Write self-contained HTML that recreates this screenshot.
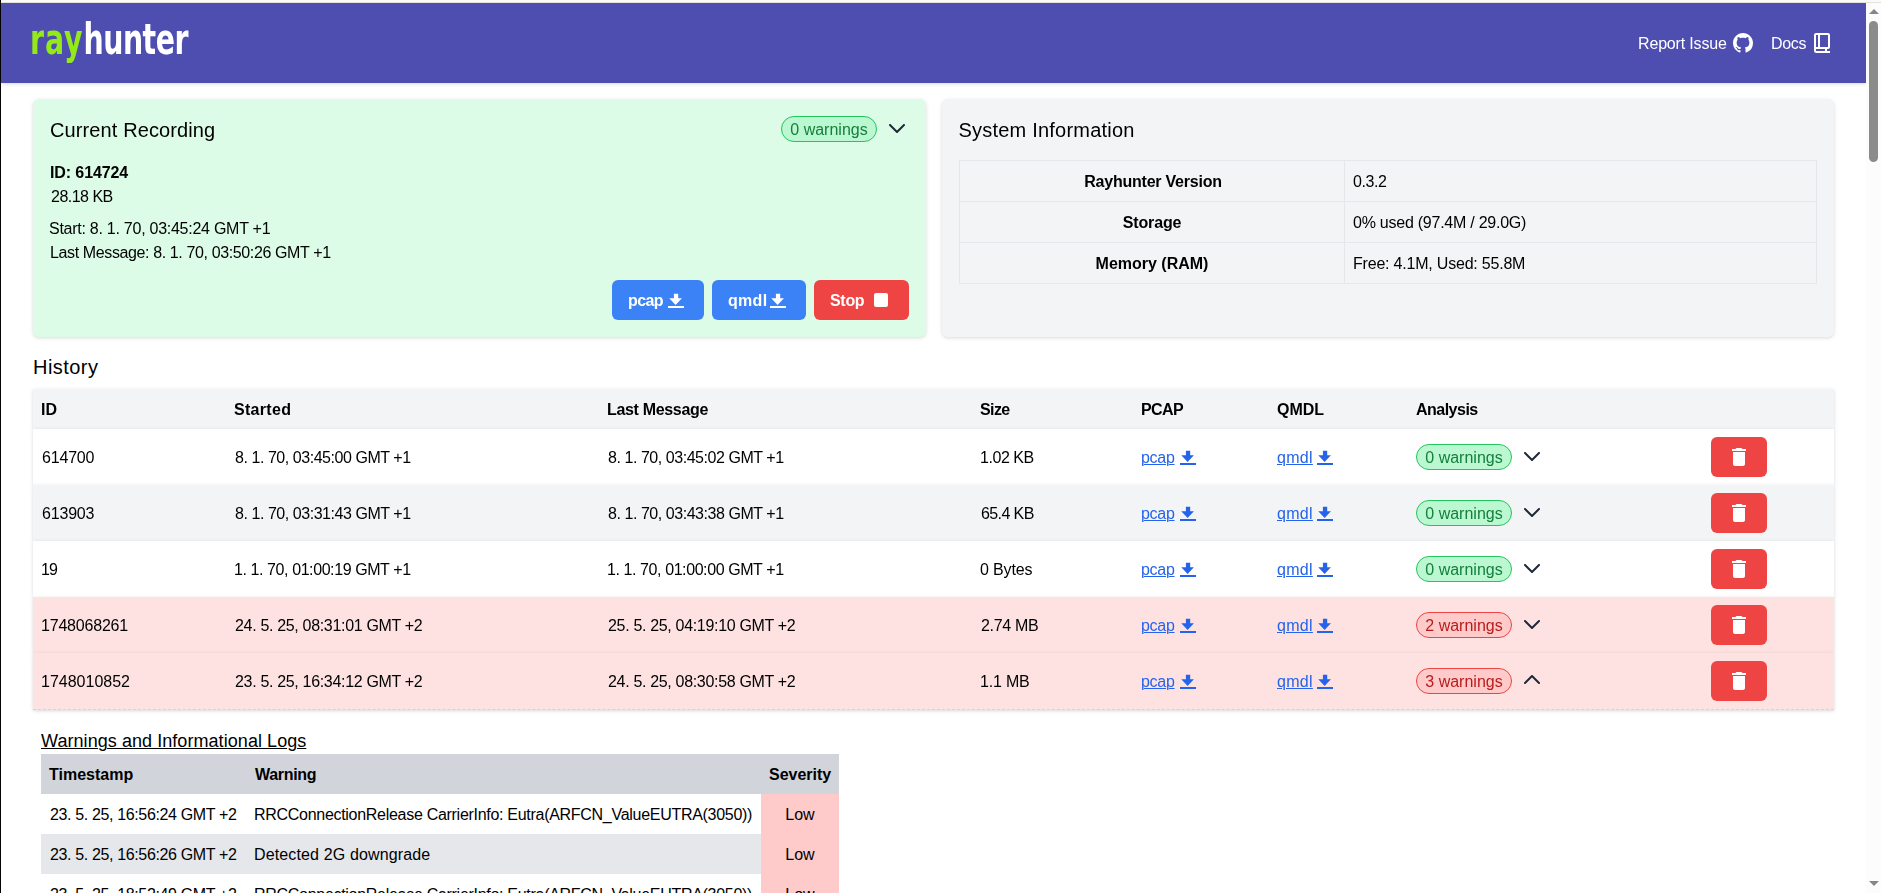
<!DOCTYPE html>
<html lang="en">
<head>
<meta charset="utf-8">
<title>Rayhunter</title>
<style>
*{box-sizing:border-box;margin:0;padding:0}
html,body{width:1881px;height:893px;overflow:hidden;background:#fff}
body{position:relative;font-family:"Liberation Sans",sans-serif;font-size:16px;line-height:24px;color:#000}
#edge{position:absolute;left:0;top:0;width:1px;height:893px;background:#050402;z-index:9}
#topstrip{position:absolute;left:1px;top:0;width:1880px;height:3px;background:linear-gradient(#fbfbfb 0,#fbfbfb 2px,#e3e3dc 2px,#e3e3dc 3px);z-index:8}
#vp{position:absolute;left:1px;top:3px;width:1865px;height:890px;overflow:hidden;background:#fff}
#sb{position:absolute;left:1866px;top:3px;width:15px;height:890px;background:#fcfcfc}
#sb .up{position:absolute;left:2.5px;top:5.6px;width:0;height:0;border-left:5px solid transparent;border-right:5px solid transparent;border-bottom:5.4px solid #868686}
#sb .dn{position:absolute;left:2.5px;top:877.6px;width:0;height:0;border-left:5px solid transparent;border-right:5px solid transparent;border-top:5.4px solid #868686}
#sb .th{position:absolute;left:3px;top:18px;width:9px;height:141px;border-radius:4.5px;background:#8b8b8b}
svg{display:block}
/* header */
#hd{position:absolute;left:0;top:0;width:1865px;height:80px;background:#4e4eb1;filter:drop-shadow(0 1px 2px rgba(0,0,0,.1)) drop-shadow(0 1px 1px rgba(0,0,0,.06));z-index:3}
.abs{position:absolute;white-space:nowrap}
.hl{color:#fff;font-size:16px;line-height:24px}
/* cards */
.card{position:absolute;top:96px;height:238px;border-radius:6px;filter:drop-shadow(0 1px 2px rgba(0,0,0,.1)) drop-shadow(0 1px 1px rgba(0,0,0,.06))}
.xl{font-size:20px;line-height:28px}
.b{font-weight:700}
.btn{position:absolute;top:181px;height:40px;border-radius:6px;color:#fff;font-weight:700}
.blue{background:#3b82f6}
.red{background:#ef4444}
.badge{position:absolute;height:26px;border-radius:13px;border:1px solid;text-align:center;line-height:24px}
.bg{background:#bbf7d0;border-color:#22c55e;color:#15803d}
.br{background:#fecaca;border-color:#ef4444;color:#b91c1c}
#systab{position:absolute;left:17px;top:61px;width:858px;border-collapse:collapse;table-layout:fixed}
#systab th,#systab td{border:1px solid #e5e7eb;height:41px;padding:0 8px;vertical-align:middle;line-height:24px}
#systab th{width:385px;text-align:center;font-weight:700}
#systab td{text-align:left}
#hist{position:absolute;left:32px;top:386px;width:1801px;height:324px}
.hrow{position:relative;height:56px;background:#fff;white-space:nowrap;filter:drop-shadow(0 1px 2px rgba(0,0,0,.1)) drop-shadow(0 1px 1px rgba(0,0,0,.06))}
.hrow.hh{height:40px;background:#f3f4f6;font-weight:700}
.hrow.alt{background:#f3f4f6}
.hrow.warn{background:#fee2e2}
.hrow.last{height:57px;border-bottom:1px dashed #d1d5db}
.hrow .c{position:absolute;top:16px;line-height:24px}
.hrow.hh .c{top:8px}
.c1{left:8px}.c2{left:201px}.c3{left:574px}.c4{left:947px}.c5{left:1108px}.c6{left:1244px}.c7{left:1383px}
.lk{color:#2563eb}
.lk .u{text-decoration:underline;text-decoration-thickness:1px;text-underline-offset:2px}
.lk svg{position:absolute;top:5px}
.c5 svg{left:39px}.c6 svg{left:40px}
.hrow .chv{position:absolute;left:1491px;top:23px}
.del{position:absolute;left:1678px;top:8px;width:56px;height:40px;border-radius:6px;background:#ef4444;padding:8px 16px}
#logs{position:absolute;left:40px;top:751px;width:798px}
.lrow{position:relative;height:40px;background:#fff;white-space:nowrap}
.lrow.lh{background:#d1d5db;font-weight:700}
.lrow.alt{background:#e5e7eb}
.lrow .c{position:absolute;top:8px;line-height:24px}
.l1{left:8px}.l2{left:213px}.l3{left:728px}
.sev{position:absolute;left:720px;top:0;width:78px;height:40px;background:#fecaca;text-align:center;line-height:24px;padding-top:8px}
/*LIB*/
.lk .u,#t-wil{text-underline-offset:1px!important}
#t-hrep{letter-spacing:-0.164px;display:inline-block;transform:translate(0px,1px)}
#t-hdoc{letter-spacing:-0.300px;display:inline-block;transform:translate(0px,1px)}
#t-cur{letter-spacing:0.112px}
#t-bcur{display:inline-block;transform:translate(0px,1px)}
#t-id{letter-spacing:-0.100px;display:inline-block;transform:translate(0px,1px)}
#t-sz{letter-spacing:-0.515px;display:inline-block;transform:translate(1px,1px)}
#t-st{letter-spacing:-0.261px;display:inline-block;transform:translate(-1px,1px)}
#t-lm{letter-spacing:-0.379px;display:inline-block;transform:translate(0px,1px)}
#t-bp{letter-spacing:-0.600px;display:inline-block;transform:translate(0px,1px)}
#t-bq{letter-spacing:0.300px;display:inline-block;transform:translate(0px,1px)}
#t-bs{letter-spacing:-0.300px;display:inline-block;transform:translate(0px,1px)}
#t-sys{letter-spacing:0.212px}
#t-rv{letter-spacing:-0.225px;display:inline-block;transform:translate(1px,1px)}
#t-v1{letter-spacing:-0.450px;display:inline-block;transform:translate(0px,1px)}
#t-sto{letter-spacing:-0.150px;display:inline-block;transform:translate(0px,1px)}
#t-v2{letter-spacing:-0.245px;display:inline-block;transform:translate(0px,1px)}
#t-mem{display:inline-block;transform:translate(0px,1px)}
#t-v3{letter-spacing:-0.205px;display:inline-block;transform:translate(0px,1px)}
#t-hist{letter-spacing:0.450px}
#t-hid{display:inline-block;transform:translate(0px,1px)}
#t-hst{letter-spacing:0.300px;display:inline-block;transform:translate(0px,1px)}
#t-hlm{letter-spacing:-0.327px;display:inline-block;transform:translate(0px,1px)}
#t-hsz{letter-spacing:-0.600px;display:inline-block;transform:translate(0px,1px)}
#t-hpc{letter-spacing:-0.600px;display:inline-block;transform:translate(0px,1px)}
#t-hqm{display:inline-block;transform:translate(0px,1px)}
#t-han{letter-spacing:-0.514px;display:inline-block;transform:translate(0px,1px)}
#t-r1a{letter-spacing:-0.180px;display:inline-block;transform:translate(1px,1px)}
#t-r1b{letter-spacing:-0.449px;display:inline-block;transform:translate(1px,1px)}
#t-r1c{letter-spacing:-0.449px;display:inline-block;transform:translate(1px,1px)}
#t-r1d{letter-spacing:-0.450px;display:inline-block;transform:translate(0px,1px)}
#t-r1p{letter-spacing:-0.300px;display:inline-block;transform:translate(0px,1px)}
#t-r1q{letter-spacing:0.300px;display:inline-block;transform:translate(0px,1px)}
#t-r1w{display:inline-block;transform:translate(0px,1px)}
#t-r2a{letter-spacing:-0.180px;display:inline-block;transform:translate(1px,1px)}
#t-r2b{letter-spacing:-0.449px;display:inline-block;transform:translate(1px,1px)}
#t-r2c{letter-spacing:-0.449px;display:inline-block;transform:translate(1px,1px)}
#t-r2d{letter-spacing:-0.600px;display:inline-block;transform:translate(1px,1px)}
#t-r2p{letter-spacing:-0.300px;display:inline-block;transform:translate(0px,1px)}
#t-r2q{letter-spacing:0.300px;display:inline-block;transform:translate(0px,1px)}
#t-r2w{display:inline-block;transform:translate(0px,1px)}
#t-r3a{letter-spacing:-0.900px;display:inline-block;transform:translate(0px,1px)}
#t-r3b{letter-spacing:-0.412px;display:inline-block;transform:translate(0px,1px)}
#t-r3c{letter-spacing:-0.412px;display:inline-block;transform:translate(0px,1px)}
#t-r3d{letter-spacing:-0.150px;display:inline-block;transform:translate(0px,1px)}
#t-r3p{letter-spacing:-0.300px;display:inline-block;transform:translate(0px,1px)}
#t-r3q{letter-spacing:0.300px;display:inline-block;transform:translate(0px,1px)}
#t-r3w{display:inline-block;transform:translate(0px,1px)}
#t-r4a{letter-spacing:-0.200px;display:inline-block;transform:translate(0px,1px)}
#t-r4b{letter-spacing:-0.324px;display:inline-block;transform:translate(1px,1px)}
#t-r4c{letter-spacing:-0.324px;display:inline-block;transform:translate(1px,1px)}
#t-r4d{letter-spacing:-0.300px;display:inline-block;transform:translate(1px,1px)}
#t-r4p{letter-spacing:-0.300px;display:inline-block;transform:translate(0px,1px)}
#t-r4q{letter-spacing:0.300px;display:inline-block;transform:translate(0px,1px)}
#t-r4w{display:inline-block;transform:translate(0px,1px)}
#t-r5a{display:inline-block;transform:translate(0px,1px)}
#t-r5b{letter-spacing:-0.324px;display:inline-block;transform:translate(1px,1px)}
#t-r5c{letter-spacing:-0.324px;display:inline-block;transform:translate(1px,1px)}
#t-r5d{letter-spacing:-0.180px;display:inline-block;transform:translate(0px,1px)}
#t-r5p{letter-spacing:-0.300px;display:inline-block;transform:translate(0px,1px)}
#t-r5q{letter-spacing:0.300px;display:inline-block;transform:translate(0px,1px)}
#t-r5w{display:inline-block;transform:translate(0px,1px)}
#t-wil{letter-spacing:0.060px;display:inline-block;transform:translate(0px,1px)}
#t-lts{display:inline-block;transform:translate(0px,1px)}
#t-lwa{letter-spacing:-0.300px;display:inline-block;transform:translate(1px,1px)}
#t-lse{display:inline-block;transform:translate(0px,1px)}
#t-l1a{letter-spacing:-0.360px;display:inline-block;transform:translate(1px,1px)}
#t-l1b{letter-spacing:-0.290px;display:inline-block;transform:translate(0px,1px)}
#t-l1c{display:inline-block;transform:translate(0px,1px)}
#t-l2a{letter-spacing:-0.360px;display:inline-block;transform:translate(1px,1px)}
#t-l2b{letter-spacing:0.135px;display:inline-block;transform:translate(0px,1px)}
#t-l2c{display:inline-block;transform:translate(0px,1px)}
#t-l3a{letter-spacing:-0.360px;display:inline-block;transform:translate(1px,1px)}
#t-l3b{letter-spacing:-0.290px;display:inline-block;transform:translate(0px,1px)}
#t-l3c{display:inline-block;transform:translate(0px,1px)}
/*END*/
</style>
</head>
<body>
<div id="edge"></div>
<div id="topstrip"></div>
<div id="vp">
<div id="hd">
<div class="abs" id="logo" style="left:29px;top:8.3px;font-family:'DejaVu Sans','Liberation Sans',sans-serif;font-size:43px;line-height:56px;font-weight:700;transform:scaleX(.66);transform-origin:0 0"><span style="color:#94ea18;letter-spacing:1.36px">ray</span><span style="color:#fff;letter-spacing:-.76px">hunter</span></div>
<div class="abs hl" id="t-hrep" style="left:1637px;top:28px">Report Issue</div>
<svg class="abs" style="left:1732px;top:30px" width="20" height="20" viewBox="0 0 16 16"><path fill="#fff" d="M8 0C3.58 0 0 3.58 0 8c0 3.54 2.29 6.53 5.47 7.59.4.07.55-.17.55-.38 0-.19-.01-.82-.01-1.49-2.01.37-2.53-.49-2.69-.94-.09-.23-.48-.94-.82-1.13-.28-.15-.68-.52-.01-.53.63-.01 1.08.58 1.23.82.72 1.21 1.87.87 2.33.66.07-.52.28-.87.51-1.07-1.78-.2-3.64-.89-3.64-3.95 0-.87.31-1.59.82-2.15-.08-.2-.36-1.02.08-2.12 0 0 .67-.21 2.2.82.64-.18 1.32-.27 2-.27.68 0 1.36.09 2 .27 1.53-1.04 2.2-.82 2.2-.82.44 1.1.16 1.92.08 2.12.51.56.82 1.27.82 2.15 0 3.07-1.87 3.75-3.65 3.95.29.25.54.73.54 1.48 0 1.07-.01 1.93-.01 2.2 0 .21.15.46.55.38A8.013 8.013 0 0016 8c0-4.42-3.58-8-8-8z"/></svg>
<div class="abs hl" id="t-hdoc" style="left:1770px;top:28px">Docs</div>
<svg class="abs" style="left:1813px;top:30px" width="16" height="20" viewBox="0 0 16 20" fill="none" stroke="#fff" stroke-width="2"><rect x="1" y="1" width="14" height="14" rx="1"/><path d="M5 1v14M1 14v3.5a1.5 1.5 0 0 0 1.500 1.500H16M12 15v4"/></svg>
</div>
<div class="card" id="gcard" style="left:32px;width:893px;background:#dcfce7">
<div class="abs xl" id="t-cur" style="left:17px;top:17px">Current Recording</div>
<div class="badge bg" id="b-cur" style="left:748px;top:17px;width:96px"><span id="t-bcur">0 warnings</span></div>
<svg class="abs chev" style="left:856px;top:25px" width="16" height="9" viewBox="0 0 16 9" fill="none" stroke="#1f2937" stroke-width="2" stroke-linecap="round" stroke-linejoin="round"><path d="M1 1l7 7 7-7"/></svg>
<div class="abs b" id="t-id" style="left:17px;top:61px">ID: 614724</div>
<div class="abs" id="t-sz" style="left:17px;top:85px">28.18 KB</div>
<div class="abs" id="t-st" style="left:17px;top:117px">Start: 8. 1. 70, 03:45:24 GMT +1</div>
<div class="abs" id="t-lm" style="left:17px;top:141px">Last Message: 8. 1. 70, 03:50:26 GMT +1</div>
<div class="btn blue" style="left:579px;width:92px"><span class="abs" id="t-bp" style="left:16px;top:8px">pcap</span><svg class="abs" style="left:56px;top:13px" width="16" height="16" viewBox="0 0 16 16"><path fill="currentColor" d="M5.900 0.700h4.300v4.500h3.700L7.600 11.900 1.300 5.200h4.600zM0 13h16v2H0z"/></svg></div>
<div class="btn blue" style="left:679px;width:94px"><span class="abs" id="t-bq" style="left:16px;top:8px">qmdl</span><svg class="abs" style="left:58px;top:13px" width="16" height="16" viewBox="0 0 16 16"><path fill="currentColor" d="M5.900 0.700h4.300v4.500h3.700L7.600 11.900 1.300 5.200h4.600zM0 13h16v2H0z"/></svg></div>
<div class="btn red" style="left:781px;width:95px"><span class="abs" id="t-bs" style="left:16px;top:8px">Stop</span><div class="abs" style="left:60px;top:13px;width:14px;height:14px;border-radius:2px;background:#fff"></div></div>
</div>
<div class="card" id="scard" style="left:941px;width:892px;background:#f3f4f6">
<div class="abs xl" id="t-sys" style="left:16.5px;top:17px">System Information</div>
<table id="systab"><tbody>
<tr><th><span id="t-rv">Rayhunter Version</span></th><td><span id="t-v1">0.3.2</span></td></tr>
<tr><th><span id="t-sto">Storage</span></th><td><span id="t-v2">0% used (97.4M / 29.0G)</span></td></tr>
<tr><th><span id="t-mem">Memory (RAM)</span></th><td><span id="t-v3">Free: 4.1M, Used: 55.8M</span></td></tr>
</tbody></table>
</div>
<div class="abs xl" id="t-hist" style="left:32px;top:350px">History</div>
<div id="hist">
<div class="hrow hh"><span class="c c1" id="t-hid">ID</span><span class="c c2" id="t-hst">Started</span><span class="c c3" id="t-hlm">Last Message</span><span class="c c4" id="t-hsz">Size</span><span class="c c5" id="t-hpc">PCAP</span><span class="c c6" id="t-hqm">QMDL</span><span class="c c7" id="t-han">Analysis</span></div>
<div class="hrow "><span class="c c1" id="t-r1a">614700</span><span class="c c2" id="t-r1b">8. 1. 70, 03:45:00 GMT +1</span><span class="c c3" id="t-r1c">8. 1. 70, 03:45:02 GMT +1</span><span class="c c4" id="t-r1d">1.02 KB</span><a class="c c5 lk"><span class="u" id="t-r1p">pcap</span><svg class="dli" width="16" height="16" viewBox="0 0 16 16"><path fill="currentColor" d="M5.900 0.700h4.300v4.500h3.700L7.600 11.900 1.300 5.200h4.600zM0 13h16v2H0z"/></svg></a><a class="c c6 lk"><span class="u" id="t-r1q">qmdl</span><svg class="dli" width="16" height="16" viewBox="0 0 16 16"><path fill="currentColor" d="M5.900 0.700h4.300v4.500h3.700L7.600 11.900 1.300 5.200h4.600zM0 13h16v2H0z"/></svg></a><div class="badge bg" style="left:1383px;top:15px;width:96px"><span id="t-r1w">0 warnings</span></div><svg class="chv" width="16" height="9" viewBox="0 0 16 9" fill="none" stroke="#1f2937" stroke-width="2" stroke-linecap="round" stroke-linejoin="round"><path d="M1 1l7 7 7-7"/></svg><div class="del"><svg width="24" height="24" viewBox="0 0 24 24"><path fill="#fff" d="M6 19c0 1.100.900 2 2 2h8c1.100 0 2-.900 2-2V7H6v12zM19 4h-3.500l-1-1h-5l-1 1H5v2h14V4z"/></svg></div></div>
<div class="hrow alt"><span class="c c1" id="t-r2a">613903</span><span class="c c2" id="t-r2b">8. 1. 70, 03:31:43 GMT +1</span><span class="c c3" id="t-r2c">8. 1. 70, 03:43:38 GMT +1</span><span class="c c4" id="t-r2d">65.4 KB</span><a class="c c5 lk"><span class="u" id="t-r2p">pcap</span><svg class="dli" width="16" height="16" viewBox="0 0 16 16"><path fill="currentColor" d="M5.900 0.700h4.300v4.500h3.700L7.600 11.900 1.300 5.200h4.600zM0 13h16v2H0z"/></svg></a><a class="c c6 lk"><span class="u" id="t-r2q">qmdl</span><svg class="dli" width="16" height="16" viewBox="0 0 16 16"><path fill="currentColor" d="M5.900 0.700h4.300v4.500h3.700L7.600 11.900 1.300 5.200h4.600zM0 13h16v2H0z"/></svg></a><div class="badge bg" style="left:1383px;top:15px;width:96px"><span id="t-r2w">0 warnings</span></div><svg class="chv" width="16" height="9" viewBox="0 0 16 9" fill="none" stroke="#1f2937" stroke-width="2" stroke-linecap="round" stroke-linejoin="round"><path d="M1 1l7 7 7-7"/></svg><div class="del"><svg width="24" height="24" viewBox="0 0 24 24"><path fill="#fff" d="M6 19c0 1.100.900 2 2 2h8c1.100 0 2-.900 2-2V7H6v12zM19 4h-3.500l-1-1h-5l-1 1H5v2h14V4z"/></svg></div></div>
<div class="hrow "><span class="c c1" id="t-r3a">19</span><span class="c c2" id="t-r3b">1. 1. 70, 01:00:19 GMT +1</span><span class="c c3" id="t-r3c">1. 1. 70, 01:00:00 GMT +1</span><span class="c c4" id="t-r3d">0 Bytes</span><a class="c c5 lk"><span class="u" id="t-r3p">pcap</span><svg class="dli" width="16" height="16" viewBox="0 0 16 16"><path fill="currentColor" d="M5.900 0.700h4.300v4.500h3.700L7.600 11.900 1.300 5.200h4.600zM0 13h16v2H0z"/></svg></a><a class="c c6 lk"><span class="u" id="t-r3q">qmdl</span><svg class="dli" width="16" height="16" viewBox="0 0 16 16"><path fill="currentColor" d="M5.900 0.700h4.300v4.500h3.700L7.600 11.900 1.300 5.200h4.600zM0 13h16v2H0z"/></svg></a><div class="badge bg" style="left:1383px;top:15px;width:96px"><span id="t-r3w">0 warnings</span></div><svg class="chv" width="16" height="9" viewBox="0 0 16 9" fill="none" stroke="#1f2937" stroke-width="2" stroke-linecap="round" stroke-linejoin="round"><path d="M1 1l7 7 7-7"/></svg><div class="del"><svg width="24" height="24" viewBox="0 0 24 24"><path fill="#fff" d="M6 19c0 1.100.900 2 2 2h8c1.100 0 2-.900 2-2V7H6v12zM19 4h-3.500l-1-1h-5l-1 1H5v2h14V4z"/></svg></div></div>
<div class="hrow warn"><span class="c c1" id="t-r4a">1748068261</span><span class="c c2" id="t-r4b">24. 5. 25, 08:31:01 GMT +2</span><span class="c c3" id="t-r4c">25. 5. 25, 04:19:10 GMT +2</span><span class="c c4" id="t-r4d">2.74 MB</span><a class="c c5 lk"><span class="u" id="t-r4p">pcap</span><svg class="dli" width="16" height="16" viewBox="0 0 16 16"><path fill="currentColor" d="M5.900 0.700h4.300v4.500h3.700L7.600 11.900 1.300 5.200h4.600zM0 13h16v2H0z"/></svg></a><a class="c c6 lk"><span class="u" id="t-r4q">qmdl</span><svg class="dli" width="16" height="16" viewBox="0 0 16 16"><path fill="currentColor" d="M5.900 0.700h4.300v4.500h3.700L7.600 11.900 1.300 5.200h4.600zM0 13h16v2H0z"/></svg></a><div class="badge br" style="left:1383px;top:15px;width:96px"><span id="t-r4w">2 warnings</span></div><svg class="chv" width="16" height="9" viewBox="0 0 16 9" fill="none" stroke="#1f2937" stroke-width="2" stroke-linecap="round" stroke-linejoin="round"><path d="M1 1l7 7 7-7"/></svg><div class="del"><svg width="24" height="24" viewBox="0 0 24 24"><path fill="#fff" d="M6 19c0 1.100.900 2 2 2h8c1.100 0 2-.900 2-2V7H6v12zM19 4h-3.500l-1-1h-5l-1 1H5v2h14V4z"/></svg></div></div>
<div class="hrow warn last"><span class="c c1" id="t-r5a">1748010852</span><span class="c c2" id="t-r5b">23. 5. 25, 16:34:12 GMT +2</span><span class="c c3" id="t-r5c">24. 5. 25, 08:30:58 GMT +2</span><span class="c c4" id="t-r5d">1.1 MB</span><a class="c c5 lk"><span class="u" id="t-r5p">pcap</span><svg class="dli" width="16" height="16" viewBox="0 0 16 16"><path fill="currentColor" d="M5.900 0.700h4.300v4.500h3.700L7.600 11.900 1.300 5.200h4.600zM0 13h16v2H0z"/></svg></a><a class="c c6 lk"><span class="u" id="t-r5q">qmdl</span><svg class="dli" width="16" height="16" viewBox="0 0 16 16"><path fill="currentColor" d="M5.900 0.700h4.300v4.500h3.700L7.600 11.900 1.300 5.200h4.600zM0 13h16v2H0z"/></svg></a><div class="badge br" style="left:1383px;top:15px;width:96px"><span id="t-r5w">3 warnings</span></div><svg class="chv" style="top:22px" width="16" height="9" viewBox="0 0 16 9" fill="none" stroke="#1f2937" stroke-width="2" stroke-linecap="round" stroke-linejoin="round"><path d="M1 8l7-7 7 7"/></svg><div class="del"><svg width="24" height="24" viewBox="0 0 24 24"><path fill="#fff" d="M6 19c0 1.100.900 2 2 2h8c1.100 0 2-.900 2-2V7H6v12zM19 4h-3.500l-1-1h-5l-1 1H5v2h14V4z"/></svg></div></div>
</div>
<div class="abs" id="t-wil" style="left:40px;top:723px;font-size:18px;line-height:28px;text-decoration:underline;text-decoration-thickness:1px;text-underline-offset:2px">Warnings and Informational Logs</div>
<div id="logs">
<div class="lrow lh"><span class="c l1" id="t-lts">Timestamp</span><span class="c l2" id="t-lwa">Warning</span><span class="c l3" id="t-lse">Severity</span></div>
<div class="lrow"><span class="c l1" id="t-l1a">23. 5. 25, 16:56:24 GMT +2</span><span class="c l2" id="t-l1b">RRCConnectionRelease CarrierInfo: Eutra(ARFCN_ValueEUTRA(3050))</span><span class="sev"><span id="t-l1c">Low</span></span></div>
<div class="lrow alt"><span class="c l1" id="t-l2a">23. 5. 25, 16:56:26 GMT +2</span><span class="c l2" id="t-l2b">Detected 2G downgrade</span><span class="sev"><span id="t-l2c">Low</span></span></div>
<div class="lrow"><span class="c l1" id="t-l3a">23. 5. 25, 18:52:49 GMT +2</span><span class="c l2" id="t-l3b">RRCConnectionRelease CarrierInfo: Eutra(ARFCN_ValueEUTRA(3050))</span><span class="sev"><span id="t-l3c">Low</span></span></div>
</div>
</div>
<div id="sb"><div class="up"></div><div class="th"></div><div class="dn"></div></div>
</body>
</html>
